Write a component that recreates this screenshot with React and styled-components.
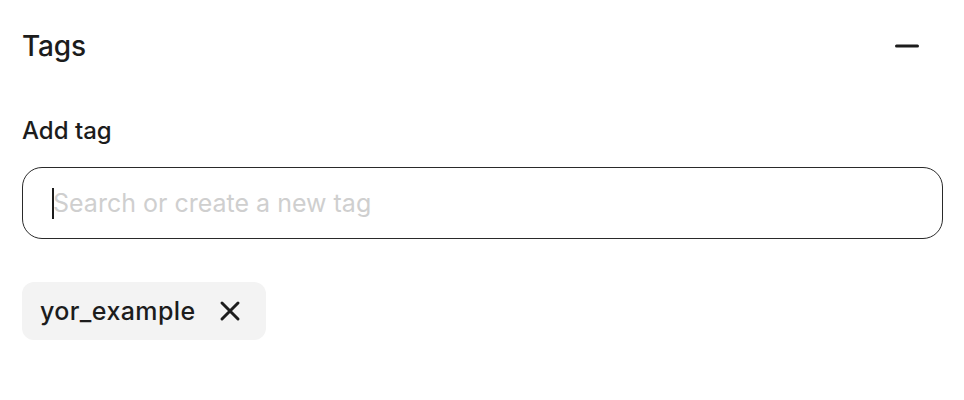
import React from 'react'
import styled, { createGlobalStyle } from 'styled-components'

const GlobalStyle = createGlobalStyle`
  body {
    margin: 0;
    background: #fff;
    font-family: Inter, 'Liberation Sans', sans-serif;
    color: #1c1c1c;
  }
`

const Panel = styled.section`
  padding: 24px 21px 0 22px;
`

const Header = styled.div`
  display: flex;
  align-items: center;
  justify-content: space-between;
  height: 44px;
`

const Title = styled.h2`
  margin: 0;
  font-size: 28px;
  font-weight: 500;
  letter-spacing: -0.2px;
`

const Collapse = styled.button`
  border: 0;
  background: none;
  padding: 0;
  width: 24px;
  height: 24px;
  margin-right: 24px;
  display: flex;
  align-items: center;
  justify-content: center;
  cursor: pointer;
`

const Label = styled.label`
  display: block;
  margin-top: 48px;
  font-size: 24px;
  font-weight: 500;
  line-height: 30px;
`

const Field = styled.div`
  position: relative;
  margin-top: 21px;
`

const Input = styled.input`
  box-sizing: border-box;
  display: block;
  width: 100%;
  height: 72px;
  padding: 0 30px;
  border: 1px solid #2a2a2a;
  border-radius: 20px;
  font: 400 25px Inter, 'Liberation Sans', sans-serif;
  color: #1c1c1c;
  outline: none;
  caret-color: transparent;
  &::placeholder {
    color: #cfcfcf;
  }
`

const Caret = styled.span`
  position: absolute;
  left: 30px;
  top: 21px;
  width: 2px;
  height: 31px;
  background: #1c1c1c;
  pointer-events: none;
`

const Tags = styled.div`
  display: flex;
  gap: 12px;
  margin-top: 43px;
`

const Chip = styled.span`
  display: inline-flex;
  align-items: center;
  gap: 23px;
  height: 58px;
  padding: 0 25px 0 18px;
  background: #f3f3f3;
  border-radius: 12px;
  font-size: 25px;
  font-weight: 500;
  letter-spacing: 0.4px;
`

const Remove = styled.button`
  border: 0;
  background: none;
  padding: 0;
  display: flex;
  cursor: pointer;
`

const App = () => (
  <Panel>
    <GlobalStyle />
    <Header>
      <Title>Tags</Title>
      <Collapse aria-label='Collapse'>
        <svg width='24' height='24' viewBox='0 0 24 24'>
          <path d='M1.5 12h21' stroke='#1c1c1c' strokeWidth='3' strokeLinecap='round' />
        </svg>
      </Collapse>
    </Header>
    <Label htmlFor='tag'>Add tag</Label>
    <Field>
      <Input id='tag' placeholder='Search or create a new tag' />
      <Caret />
    </Field>
    <Tags>
      <Chip>
        yor_example
        <Remove aria-label='Remove tag'>
          <svg width='22' height='22' viewBox='0 0 22 22'>
            <path d='M3 3l16 16M19 3L3 19' stroke='#1c1c1c' strokeWidth='3' strokeLinecap='round' />
          </svg>
        </Remove>
      </Chip>
    </Tags>
  </Panel>
)

export default App
